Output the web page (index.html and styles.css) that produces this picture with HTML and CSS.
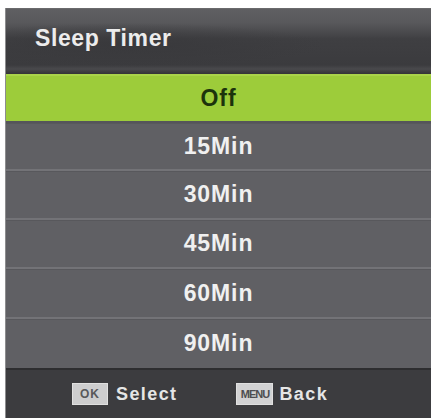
FILE: index.html
```html
<!DOCTYPE html>
<html>
<head>
<meta charset="utf-8">
<link rel="stylesheet" href="styles.css">
</head>
<body>
<div class="screen">
  <div class="header"><span class="title">Sleep Timer</span></div>
  <div class="list">
    <div class="row sel r1">Off</div>
    <div class="row r2">15Min</div>
    <div class="row r3">30Min</div>
    <div class="row r4">45Min</div>
    <div class="row r5">60Min</div>
    <div class="row r6">90Min</div>
  </div>
  <div class="footer">
    <div class="hint"><span class="key ok">OK</span><span class="label">Select</span></div>
    <div class="hint back"><span class="key menu">MENU</span><span class="label">Back</span></div>
  </div>
</div>
</body>
</html>
```
FILE: styles.css
```css
html, body {
  margin: 0;
  padding: 0;
  background: #ffffff;
}
body {
  width: 431px;
  height: 418px;
  overflow: hidden;
}
.screen {
  margin: 8px 0 0 5px;
  width: 426px;
  height: 410px;
  display: flex;
  flex-direction: column;
  border-left: 1px solid #8c8c8e;
  box-sizing: border-box;
  font-family: "Liberation Sans", Arial, sans-serif;
  font-weight: bold;
}
.header {
  height: 66px;
  flex: none;
  display: flex;
  align-items: center;
  padding-left: 29px;
  box-sizing: border-box;
  border-top: 1px solid #6a6a6c;
  background:
    radial-gradient(ellipse 200px 22px at 120px 36px, rgba(56,56,59,0.85) 0%, rgba(56,56,59,0) 100%),
    linear-gradient(to bottom, #5f5f62 0px, #58585b 14px, #4c4c4f 22px, #3f3f42 30px, #3b3b3e 56px, #49494c 60px, #3c3c3f 63px, #2f2f31 66px);
}
.title {
  color: #ececec;
  font-size: 23px;
  letter-spacing: 0.6px;
  margin-top: -6px;
}
.list {
  display: flex;
  flex-direction: column;
  flex: none;
}
.row {
  display: flex;
  align-items: center;
  justify-content: center;
  color: #f0f0f0;
  font-size: 23px;
  letter-spacing: 0.9px;
  background: #606064;
  border-top: 2px solid #737377;
  box-sizing: border-box;
  box-shadow: inset 0 1px 0 #58585c;
}
.row.sel {
  background: #9dcc3a;
  color: #1c330c;
  border-top: 2px solid #aad44a;
  box-shadow: none;
}
.r1 { height: 47px; }
.r2 { height: 48px; border-top-color: #55555a; }
.r3 { height: 49px; }
.r4 { height: 49px; }
.r5 { height: 50px; }
.r6 { height: 51px; }
.footer {
  flex: 1;
  display: flex;
  align-items: center;
  padding-left: 66px;
  background: #3c3c3f;
  border-top: 2px solid #2e2e30;
  box-sizing: border-box;
}
.hint {
  display: flex;
  align-items: center;
}
.back {
  margin-left: 59px;
}
.key {
  display: flex;
  align-items: center;
  justify-content: center;
  width: 36px;
  height: 22px;
  background: #cdcdce;
  border: 1px solid #e0e0e0;
  box-sizing: border-box;
  color: #58585a;
  font-size: 12px;
  letter-spacing: 1px;
}
.key.menu {
  width: 37px;
  font-size: 11px;
  letter-spacing: -1px;
  color: #4e4e50;
  background: #d2d2d3;
}
.label {
  color: #e6e6e6;
  font-size: 18px;
  letter-spacing: 1.4px;
  margin-left: 8px;
}
.back .label {
  margin-left: 6px;
}
```
